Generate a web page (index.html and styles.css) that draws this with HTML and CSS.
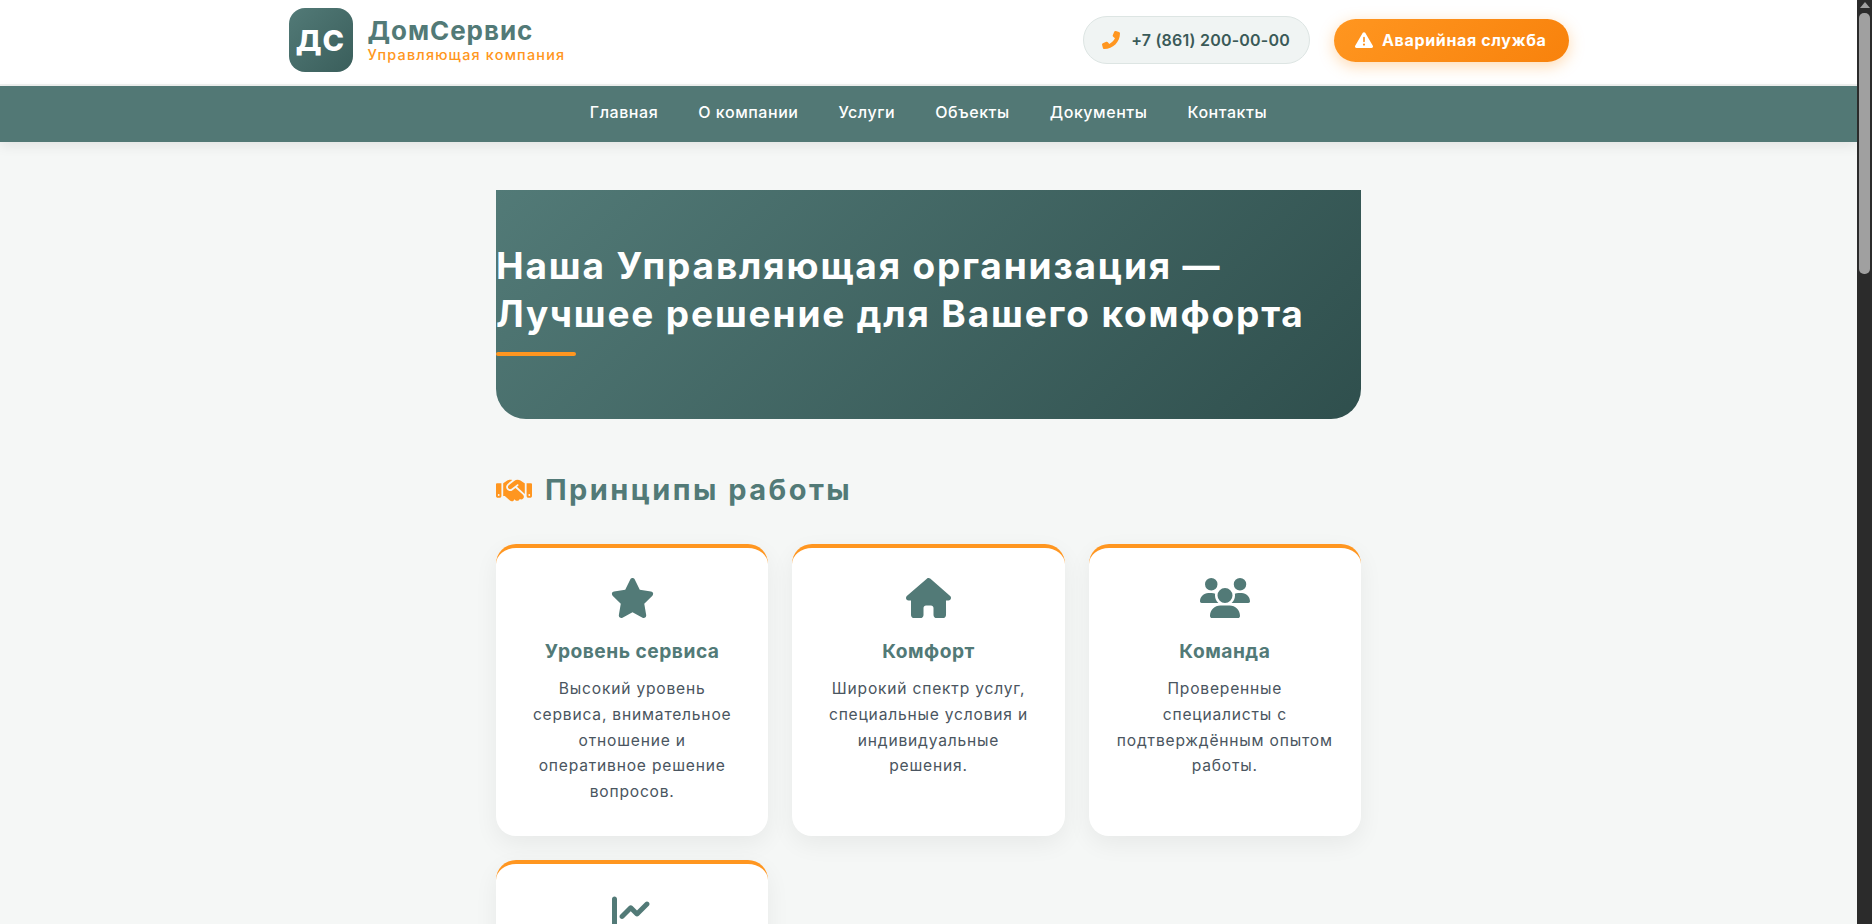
FILE: index.html
```html
<!DOCTYPE html>
<html lang="ru">
<head>
  <meta charset="UTF-8" />
  <meta name="viewport" content="width=device-width, initial-scale=1.0"/>
  <title>ДомСервис — Управляющая компания</title>
  <link rel="stylesheet" href="styles.css">
</head>
<body>
  <div class="window">
    <div class="page">
      <header class="topbar">
        <div class="topbar-inner">
          <a class="brand" href="#">
            <span class="brand-logo">ДС</span>
            <span class="brand-text">
              <span class="brand-name">ДомСервис</span>
              <span class="brand-sub">Управляющая компания</span>
            </span>
          </a>
          <div class="topbar-actions">
            <a class="phone" href="#">
              <svg class="phone-icon" viewBox="0 0 512 512"><g transform="translate(512 0) scale(-1 1)"><path d="M164.9 24.6c-7.7-18.6-28-28.5-47.4-23.2l-88 24C12.1 30.2 0 46 0 64C0 311.4 200.6 512 448 512c18 0 33.8-12.1 38.6-29.5l24-88c5.3-19.4-4.6-39.7-23.2-47.4l-96-40c-16.3-6.8-35.2-2.1-46.3 11.6L304.7 368C234.3 334.7 177.3 277.7 144 207.3L193.3 167c13.7-11.2 18.4-30 11.6-46.3l-40-96z"/></g></svg>
              <span class="phone-number">+7 (861) 200-00-00</span>
            </a>
            <a class="emergency" href="#">
              <svg class="emergency-icon" viewBox="0 0 512 512"><path d="M256 32c14.2 0 27.3 7.5 34.5 19.8l216 368c7.3 12.4 7.3 27.7 .2 40.1S486.3 480 472 480H40c-14.3 0-27.6-7.7-34.7-20.1s-7-27.8 .2-40.1l216-368C228.7 39.5 241.8 32 256 32zm0 128c-13.3 0-24 10.7-24 24V296c0 13.3 10.7 24 24 24s24-10.7 24-24V184c0-13.3-10.7-24-24-24zm32 224a32 32 0 1 0 -64 0 32 32 0 1 0 64 0z"/></svg>
              <span>Аварийная служба</span>
            </a>
          </div>
        </div>
      </header>

      <nav class="mainnav">
        <a href="#">Главная</a>
        <a href="#">О компании</a>
        <a href="#">Услуги</a>
        <a href="#">Объекты</a>
        <a href="#">Документы</a>
        <a href="#">Контакты</a>
      </nav>

      <main class="content">
        <section class="hero">
          <h1>Наша Управляющая организация —<br>Лучшее решение для Вашего комфорта</h1>
          <div class="hero-line"></div>
        </section>

        <h2 class="section-title">
          <svg class="section-icon" viewBox="0 0 640 512"><path d="M323.4 85.2l-96.8 78.4c-16.1 13-19.2 36.4-7 53.1c12.9 17.8 38 21.3 55.3 7.8l99.3-77.2c7-5.4 17-4.2 22.5 2.8s4.2 17-2.8 22.5l-20.9 16.2L512 316.8V128h-.7l-3.9-2.5L434.8 79c-15.3-9.8-33.2-15-51.4-15c-21.8 0-43 7.5-60 21.2zm22.8 124.4l-51.7 40.2C263 274.4 217.3 268 193.7 235.6c-22.2-30.5-16.6-73.1 12.7-96.8l83.2-67.3c-11.6-4.9-24.1-7.4-36.8-7.4C234 64 215.7 69.6 200 80l-72 48V352h28.2l91.4 83.4c19.6 17.9 49.9 16.5 67.8-3.1c5.5-6.1 9.2-13.2 11.1-20.6l17 15.6c19.5 17.9 49.9 16.6 67.8-2.9c4.5-4.9 7.8-10.6 9.9-16.5c19.4 13 45.8 10.3 62.1-7.5c17.9-19.5 16.6-49.9-2.9-67.8l-134.2-123zM16 128c-8.8 0-16 7.2-16 16V352c0 17.7 14.3 32 32 32H64c17.7 0 32-14.3 32-32V128H16zM48 320a16 16 0 1 1 0 32 16 16 0 1 1 0-32zM544 128V352c0 17.7 14.3 32 32 32h32c17.7 0 32-14.3 32-32V144c0-8.8-7.2-16-16-16H544zm32 208a16 16 0 1 1 32 0 16 16 0 1 1 -32 0z"/></svg>
          Принципы работы
        </h2>

        <div class="cards">
          <article class="card">
            <svg class="card-icon" viewBox="0 0 576 512"><path d="M316.9 18C311.6 7 300.4 0 288.1 0s-23.4 7-28.8 18L195 150.3 51.4 171.5c-12 1.8-22 10.2-25.7 21.7s-.7 24.2 7.9 32.7L137.8 329 113.2 474.7c-2 12 3 24.2 12.9 31.3s23 8 33.8 2.3l128.3-68.5 128.3 68.5c10.8 5.7 23.9 4.9 33.8-2.3s14.9-19.3 12.9-31.3L438.5 329 542.7 225.9c8.6-8.5 11.7-21.2 7.9-32.7s-13.7-19.9-25.7-21.7L381.2 150.3 316.9 18z"/></svg>
            <h3>Уровень сервиса</h3>
            <p>Высокий уровень сервиса, внимательное отношение и оперативное решение вопросов.</p>
          </article>
          <article class="card">
            <svg class="card-icon" viewBox="0 0 576 512"><path d="M575.8 255.5c0 18-15 32.1-32 32.1h-32l.7 160.2c0 2.7-.2 5.4-.5 8.1V472c0 22.1-17.9 40-40 40H456c-1.1 0-2.2 0-3.3-.1c-1.4 .1-2.8 .1-4.2 .1H416 392c-22.1 0-40-17.9-40-40V448 384c0-17.7-14.3-32-32-32H256c-17.7 0-32 14.3-32 32v64 24c0 22.1-17.9 40-40 40H160 128.1c-1.5 0-3-.1-4.5-.2c-1.2 .1-2.4 .2-3.6 .2H104c-22.1 0-40-17.9-40-40V360c0-.9 0-1.9 .1-2.8V287.6H32c-18 0-32-14-32-32.1c0-9 3-17 10-24L266.4 8c7-7 15-8 22-8s15 2 21 7L564.8 231.5c8 7 12 15 11 24z"/></svg>
            <h3>Комфорт</h3>
            <p>Широкий спектр услуг, специальные условия и индивидуальные решения.</p>
          </article>
          <article class="card">
            <svg class="card-icon" viewBox="0 0 640 512"><path d="M144 0a80 80 0 1 1 0 160A80 80 0 1 1 144 0zM512 0a80 80 0 1 1 0 160A80 80 0 1 1 512 0zM0 298.7C0 239.8 47.8 192 106.7 192h42.7c15.9 0 31 3.5 44.6 9.7c-1.3 7.2-1.9 14.7-1.9 22.3c0 38.2 16.8 72.5 43.3 96c-.2 0-.4 0-.7 0H21.3C9.6 320 0 310.4 0 298.7zM405.3 320c-.2 0-.4 0-.7 0c26.6-23.5 43.3-57.8 43.3-96c0-7.6-.7-15-1.9-22.3c13.6-6.3 28.7-9.7 44.6-9.7h42.7C592.2 192 640 239.8 640 298.7c0 11.8-9.6 21.3-21.3 21.3H405.3zM224 224a96 96 0 1 1 192 0 96 96 0 1 1 -192 0zM128 485.3C128 411.7 187.7 352 261.3 352H378.7C452.3 352 512 411.7 512 485.3c0 14.7-11.9 26.7-26.7 26.7H154.7c-14.7 0-26.7-11.9-26.7-26.7z"/></svg>
            <h3>Команда</h3>
            <p>Проверенные специалисты с подтверждённым опытом работы.</p>
          </article>
          <article class="card">
            <svg class="card-icon" viewBox="0 0 512 512"><path d="M64 64c0-17.7-14.3-32-32-32S0 46.3 0 64V400c0 44.2 35.8 80 80 80H480c17.7 0 32-14.3 32-32s-14.3-32-32-32H80c-8.8 0-16-7.2-16-16V64zm406.6 86.6c12.5-12.5 12.5-32.8 0-45.3s-32.8-12.5-45.3 0L320 210.7l-57.4-57.4c-12.5-12.5-32.8-12.5-45.3 0l-112 112c-12.5 12.5-12.5 32.8 0 45.3s32.8 12.5 45.3 0L240 221.3l57.4 57.4c12.5 12.5 32.8 12.5 45.3 0l128-128z"/></svg>
          </article>
        </div>
      </main>
    </div>

    <div class="scrollbar">
      <div class="scrollbar-arrow"></div>
      <div class="scrollbar-thumb"></div>
    </div>
  </div>
</body>
</html>
```

FILE: styles.css
```css
* {
  box-sizing: border-box;
}

body {
  margin: 0;
  background-color: #f5f7f6;
  color: #4a5560;
  font-family: "Inter", "Liberation Sans", sans-serif;
}

a {
  color: inherit;
  text-decoration: none;
}

.window {
  display: flex;
  height: 100vh;
  overflow: hidden;
}

.page {
  flex: 1;
  min-width: 0;
  overflow: hidden;
}

/* header */
.topbar {
  background-color: #fff;
  border-bottom: 2px solid #eef0ef;
  height: 86px;
  padding-top: 8px;
}

.topbar-inner {
  max-width: 1280px;
  margin: 0 auto;
  height: 64px;
  display: flex;
  align-items: center;
  justify-content: space-between;
}

.brand {
  display: flex;
  align-items: center;
  gap: 15px;
}

.brand-logo {
  width: 64px;
  height: 64px;
  border-radius: 16px;
  background: linear-gradient(135deg, #527a77, #3a5e5b);
  color: #fff;
  font-size: 29px;
  font-weight: 800;
  letter-spacing: 1px;
  display: flex;
  align-items: center;
  justify-content: center;
}

.brand-text {
  display: flex;
  flex-direction: column;
}

.brand-name {
  color: #527a77;
  font-size: 26px;
  font-weight: 700;
  line-height: 29px;
  letter-spacing: 0.95px;
}

.brand-sub {
  color: #ff9620;
  font-size: 14.4px;
  font-weight: 500;
  line-height: 19px;
  letter-spacing: 1.2px;
}

.topbar-actions {
  display: flex;
  align-items: center;
  gap: 24px;
}

.phone {
  display: flex;
  align-items: center;
  gap: 11px;
  height: 48px;
  padding: 0 19px 0 18px;
  background-color: #f0f4f3;
  border: 1px solid #dde5e3;
  border-radius: 24px;
  color: #3a5a58;
  font-size: 16px;
  font-weight: 600;
  letter-spacing: 0.2px;
}

.phone-icon {
  width: 18px;
  height: 18px;
  fill: #ff9620;
}

.emergency {
  display: flex;
  align-items: center;
  gap: 9px;
  height: 43px;
  padding: 0 22px 0 21px;
  border-radius: 22px;
  background: linear-gradient(135deg, #ff9620, #f8820c);
  box-shadow: 0 4px 15px rgba(255, 150, 32, 0.35);
  color: #fff;
  font-size: 16px;
  font-weight: 700;
  letter-spacing: 0.65px;
}

.emergency-icon {
  width: 18px;
  height: 18px;
  fill: #fff;
}

/* nav */
.mainnav {
  height: 56px;
  padding-bottom: 4px;
  background-color: #527875;
  box-shadow: 0 4px 12px rgba(0, 0, 0, 0.08);
  display: flex;
  align-items: center;
  justify-content: center;
  gap: 40px;
  color: #fff;
  font-size: 16px;
  font-weight: 500;
  letter-spacing: 0.55px;
  position: relative;
}

/* main */
.content {
  width: 865px;
  margin: 0 auto;
  padding-top: 48px;
}

.hero {
  height: 229px;
  padding-top: 52px;
  border-radius: 0 0 30px 30px;
  background: linear-gradient(135deg, #527a77, #2f4f4d);
}

.hero h1 {
  margin: 0;
  color: #fff;
  font-size: 37px;
  font-weight: 700;
  line-height: 47.5px;
  letter-spacing: 1.85px;
}

.hero-line {
  width: 80px;
  height: 4px;
  margin-top: 15px;
  border-radius: 2px;
  background-color: #ff9620;
}

.section-title {
  display: flex;
  align-items: center;
  gap: 13px;
  margin: 51px 0 0;
  color: #527a77;
  font-size: 29px;
  font-weight: 700;
  line-height: 40px;
  letter-spacing: 2.45px;
}

.section-icon {
  width: 36px;
  height: 29px;
  fill: #ff9620;
}

.cards {
  display: grid;
  grid-template-columns: repeat(3, 1fr);
  grid-auto-rows: 292px;
  gap: 24px;
  margin-top: 34px;
}

.card {
  padding: 30px 27px 0;
  border-top: 4px solid #ff9620;
  border-radius: 20px;
  background-color: #fff;
  box-shadow: 0 8px 24px rgba(0, 0, 0, 0.06);
  text-align: center;
}

.card-icon {
  display: block;
  height: 40px;
  margin: 0 auto;
  fill: #527a77;
}

.card h3 {
  margin: 19px 0 0;
  color: #527a77;
  font-size: 19.2px;
  font-weight: 700;
  line-height: 28px;
  letter-spacing: 0.5px;
}

.card p {
  margin: 11px 0 0;
  font-size: 15.6px;
  line-height: 25.8px;
  letter-spacing: 0.8px;
}

/* the browser's scrollbar is not painted in the shot, so it is drawn here */
.scrollbar {
  width: 15px;
  padding: 1px 2px 0;
  background-color: #2b2b2b;
}

.scrollbar-arrow {
  width: 0;
  height: 0;
  margin: 1px auto 5px;
  border-left: 5px solid transparent;
  border-right: 5px solid transparent;
  border-bottom: 6px solid #a0a0a0;
}

.scrollbar-thumb {
  height: 261px;
  border-radius: 5px;
  background-color: #a0a0a0;
}
```
